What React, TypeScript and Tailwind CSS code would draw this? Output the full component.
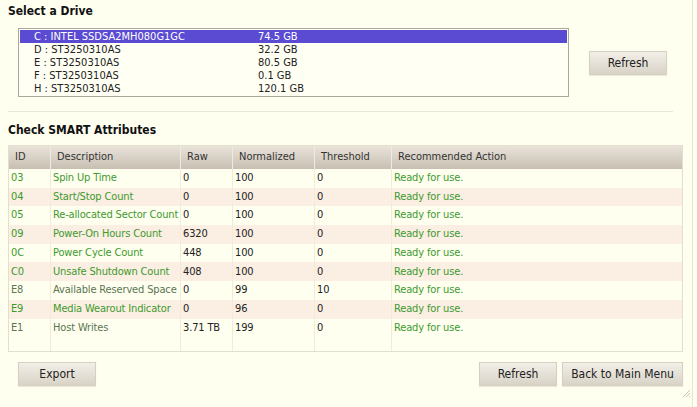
import React from 'react';

interface Drive {
  name: string;
  size: string;
}

interface Attr {
  id: string;
  desc: string;
  raw: string;
  norm: string;
  thr: string;
  action: string;
  muted?: boolean;
}

const drives: Drive[] = [
  { name: 'C : INTEL SSDSA2MH080G1GC', size: '74.5 GB' },
  { name: 'D : ST3250310AS', size: '32.2 GB' },
  { name: 'E : ST3250310AS', size: '80.5 GB' },
  { name: 'F : ST3250310AS', size: '0.1 GB' },
  { name: 'H : ST3250310AS', size: '120.1 GB' },
];

const attrs: Attr[] = [
  { id: '03', desc: 'Spin Up Time', raw: '0', norm: '100', thr: '0', action: 'Ready for use.' },
  { id: '04', desc: 'Start/Stop Count', raw: '0', norm: '100', thr: '0', action: 'Ready for use.' },
  { id: '05', desc: 'Re-allocated Sector Count', raw: '0', norm: '100', thr: '0', action: 'Ready for use.' },
  { id: '09', desc: 'Power-On Hours Count', raw: '6320', norm: '100', thr: '0', action: 'Ready for use.' },
  { id: '0C', desc: 'Power Cycle Count', raw: '448', norm: '100', thr: '0', action: 'Ready for use.' },
  { id: 'C0', desc: 'Unsafe Shutdown Count', raw: '408', norm: '100', thr: '0', action: 'Ready for use.' },
  { id: 'E8', desc: 'Available Reserved Space', raw: '0', norm: '99', thr: '10', action: 'Ready for use.', muted: true },
  { id: 'E9', desc: 'Media Wearout Indicator', raw: '0', norm: '96', thr: '0', action: 'Ready for use.' },
  { id: 'E1', desc: 'Host Writes', raw: '3.71 TB', norm: '199', thr: '0', action: 'Ready for use.', muted: true },
];

const cols = 'grid grid-cols-[42px_130px_52px_82px_77px_1fr]';

function Button({ label, width }: { label: string; width: string }) {
  return (
    <button
      className={`${width} h-[24px] text-[12px] text-[#222] border border-[#d6d0c3] bg-gradient-to-b from-[#f2efe8] to-[#d9d3c7] shadow-[0_1px_1px_rgba(0,0,0,0.08)]`}
    >
      {label}
    </button>
  );
}

export default function App() {
  return (
    <div
      className="relative flex w-[697px] h-[407px] bg-[#fffff0] overflow-hidden"
      style={{ fontFamily: '"DejaVu Sans Condensed", "Liberation Sans", Arial, sans-serif' }}
    >
      <div className="w-[693px] h-full border-r border-[#e7e3d1] px-[8px] flex flex-col">
        <div className="h-[22px] flex items-center text-[12px] font-bold text-[#111]">Select a Drive</div>

        <div className="mt-[6px] flex items-center">
          <div className="ml-[10px] w-[551px] h-[69px] border border-[#aaa79b] bg-[#fffff4] pt-[1px] px-[1px]">
            {drives.map((d, i) => (
              <div
                key={d.name}
                className={`h-[13px] grid grid-cols-[224px_1fr] pl-[14px] text-[11px] leading-[13px] ${
                  i === 0 ? 'bg-[#5a4bd2] text-white' : 'text-[#222]'
                }`}
              >
                <span>{d.name}</span>
                <span>{d.size}</span>
              </div>
            ))}
          </div>
          <div className="ml-[20px]">
            <Button label="Refresh" width="w-[78px]" />
          </div>
        </div>

        <div className="mt-[14px] w-[665px] border-t border-[#ebe7d8]" />

        <div className="mt-[8px] h-[20px] flex items-center text-[12px] font-bold text-[#111]">
          Check SMART Attributes
        </div>

        <div className="mt-[5px] w-[675px] h-[207px] border border-[#e3dfcf] flex flex-col">
          <div className={`${cols} h-[23px] bg-gradient-to-b from-[#e9e3da] to-[#c8bfb2] text-[11px] text-[#333]`}>
            {['ID', 'Description', 'Raw', 'Normalized', 'Threshold', 'Recommended Action'].map((h, i) => (
              <div
                key={h}
                className={`flex items-center pl-[6px] ${i < 5 ? 'border-r border-[#efebe4]' : ''}`}
              >
                {h}
              </div>
            ))}
          </div>
          <div className="flex-1 flex flex-col">
            {attrs.map((a, i) => {
              const tone = a.muted ? 'text-[#5b7650]' : 'text-[#3d9a2d]';
              const cells = [
                { v: a.id, c: tone },
                { v: a.desc, c: tone },
                { v: a.raw, c: 'text-[#222]' },
                { v: a.norm, c: 'text-[#222]' },
                { v: a.thr, c: 'text-[#222]' },
                { v: a.action, c: 'text-[#3d9a2d]' },
              ];
              return (
                <div
                  key={a.id}
                  className={`${cols} h-[18.7px] text-[11px] tracking-[-0.15px] ${i % 2 === 1 ? 'bg-[#fbeee3]' : ''}`}
                >
                  {cells.map((c, j) => (
                    <div
                      key={j}
                      className={`flex items-center pl-[2px] whitespace-nowrap ${c.c} ${
                        j < 5 ? 'border-r border-[#f0ebdd]' : ''
                      }`}
                    >
                      {c.v}
                    </div>
                  ))}
                </div>
              );
            })}
            <div className={`${cols} flex-1`}>
              {[0, 1, 2, 3, 4, 5].map((j) => (
                <div key={j} className={j < 5 ? 'border-r border-[#f0ebdd]' : ''} />
              ))}
            </div>
          </div>
        </div>

        <div className="mt-[9px] w-[675px] flex items-center">
          <div className="ml-[10px]">
            <Button label="Export" width="w-[78px]" />
          </div>
          <div className="ml-auto flex gap-[5px]">
            <Button label="Refresh" width="w-[78px]" />
            <Button label="Back to Main Menu" width="w-[121px]" />
          </div>
        </div>
      </div>

      <svg className="absolute right-[6px] bottom-[9px]" width="10" height="10" viewBox="0 0 10 10">
        <path d="M9 2 L2 9 M9 5 L5 9 M9 8 L8 9" stroke="#c9c5b6" strokeWidth="1" />
      </svg>
    </div>
  );
}
